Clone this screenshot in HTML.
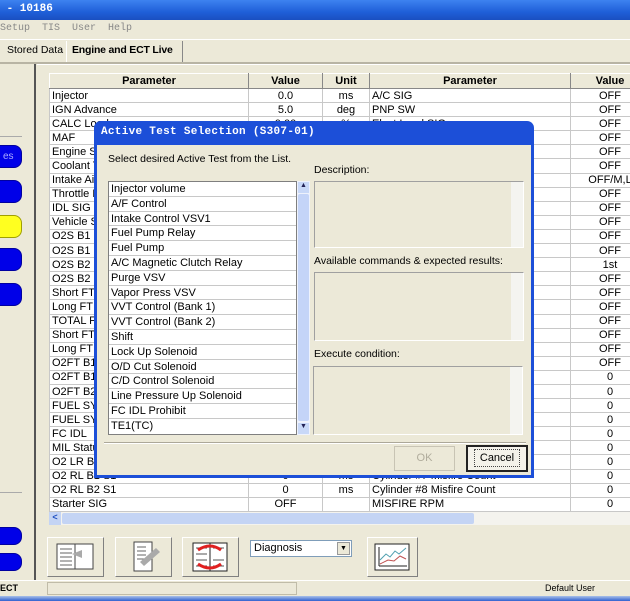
<!DOCTYPE html>
<html><head><meta charset="utf-8"><style>
*{margin:0;padding:0;box-sizing:border-box}
body{width:630px;height:601px;overflow:hidden;background:#ece9d8;font-family:"Liberation Sans",sans-serif;font-size:11px;color:#000;position:relative}
.a{position:absolute}
#title{left:0;top:0;width:630px;height:20px;background:linear-gradient(#3d82f0,#1f5fd8 60%,#1a4fc0);color:#fff;font:bold 11px "Liberation Mono",monospace;padding:3px 0 0 0}
#menu{left:0;top:20px;width:630px;height:18px;background:#ece9d8;color:#888;font:10px "Liberation Mono",monospace;padding:3px 0 0 0}
#tabs{left:0;top:40px;height:22px;font-size:10.5px}
table{border-collapse:collapse;table-layout:fixed}
#grid{left:49px;top:73px;width:600px;background:#fff}
#grid td{height:14.1px;border:1px solid #c8c8c8;padding:0 2px;white-space:nowrap;overflow:hidden;font-size:11px;line-height:12px}
#grid th{height:15px;background:#ece9d8;border:1px solid #888;font-weight:bold;font-size:11px;border-top-color:#fff;border-left-color:#fff}
.c{text-align:center}
.btn{border-radius:8px;background:#0000e8;border:1px solid #0000a0}
#dlg{left:94px;top:121px;width:440px;height:357px;background:#1c4fd8;border-radius:7px 7px 0 0}
#dlgin{left:3px;top:24px;width:434px;height:330px;background:#ece9d8}
#dlgt{left:7px;top:5px;color:#fff;font:bold 11px "Liberation Mono",monospace;letter-spacing:.3px}
.lst div{height:14.8px;border-bottom:1px solid #c8c8c8;padding-left:2px;font-size:11px;line-height:14px;white-space:nowrap}
.box{background:#ece9d8;border:1px solid #a0a0a0;border-right-color:#fff;border-bottom-color:#fff}
.sb{background:#f4f4f0}
.tb{background:#ece9d8;border:1px solid #fff;border-right-color:#808080;border-bottom-color:#808080}
</style></head><body>
<div id="title" class="a">&nbsp;- 10186</div>
<div id="menu" class="a">Setup&nbsp; TIS&nbsp; User&nbsp; Help</div>
<div class="a" style="left:0;top:39px;width:630px;height:1px;background:#fff"></div>
<div id="tabs" class="a"><span class="a" style="left:7px;top:4px;width:58px;white-space:nowrap">Stored Data</span><span class="a" style="left:66px;top:1px;width:117px;height:21px;border-right:1px solid #888;border-left:1px solid #fff;padding:3px 0 0 5px;font-weight:bold;white-space:nowrap;letter-spacing:-0.2px">Engine and ECT Live</span></div>
<div class="a" style="left:0;top:62px;width:630px;height:2px;background:#b8b4a4"></div>
<div class="a" style="left:34px;top:64px;width:2px;height:516px;background:#555"></div>
<div class="a" style="left:37px;top:64px;width:593px;height:1px;background:#fff"></div>
<div class="a" style="left:0;top:136px;width:22px;height:1px;background:#aaa"></div>
<div class="a btn" style="left:-10px;top:145px;width:32px;height:23px;color:#aaf;font-size:10px;padding:5px 0 0 12px">es</div>
<div class="a btn" style="left:-10px;top:180px;width:32px;height:23px"></div>
<div class="a btn" style="left:-10px;top:215px;width:32px;height:23px;background:#ffff20;border-color:#a0a000"></div>
<div class="a btn" style="left:-10px;top:248px;width:32px;height:23px"></div>
<div class="a btn" style="left:-10px;top:283px;width:32px;height:23px"></div>
<div class="a" style="left:0;top:492px;width:22px;height:1px;background:#aaa"></div>
<div class="a btn" style="left:-10px;top:527px;width:32px;height:18px"></div>
<div class="a btn" style="left:-10px;top:553px;width:32px;height:18px"></div>
<table id="grid" class="a">
<colgroup><col style="width:199px"><col style="width:74px"><col style="width:47px"><col style="width:201px"><col style="width:79px"></colgroup>
<tr><th>Parameter</th><th>Value</th><th>Unit</th><th>Parameter</th><th>Value</th></tr>
<tr><td>Injector</td><td class="c">0.0</td><td class="c">ms</td><td>A/C SIG</td><td class="c">OFF</td></tr>
<tr><td>IGN Advance</td><td class="c">5.0</td><td class="c">deg</td><td>PNP SW</td><td class="c">OFF</td></tr>
<tr><td>CALC Load</td><td class="c">0.00</td><td class="c">%</td><td>Elect Load SIG</td><td class="c">OFF</td></tr>
<tr><td>MAF</td><td></td><td></td><td></td><td class="c">OFF</td></tr>
<tr><td>Engine SPD</td><td></td><td></td><td></td><td class="c">OFF</td></tr>
<tr><td>Coolant Temp</td><td></td><td></td><td></td><td class="c">OFF</td></tr>
<tr><td>Intake Air</td><td></td><td></td><td></td><td class="c">OFF/M,L</td></tr>
<tr><td>Throttle POS</td><td></td><td></td><td></td><td class="c">OFF</td></tr>
<tr><td>IDL SIG</td><td></td><td></td><td></td><td class="c">OFF</td></tr>
<tr><td>Vehicle SPD</td><td></td><td></td><td></td><td class="c">OFF</td></tr>
<tr><td>O2S B1 S1</td><td></td><td></td><td></td><td class="c">OFF</td></tr>
<tr><td>O2S B1 S2</td><td></td><td></td><td></td><td class="c">OFF</td></tr>
<tr><td>O2S B2 S1</td><td></td><td></td><td></td><td class="c">1st</td></tr>
<tr><td>O2S B2 S2</td><td></td><td></td><td></td><td class="c">OFF</td></tr>
<tr><td>Short FT #1</td><td></td><td></td><td></td><td class="c">OFF</td></tr>
<tr><td>Long FT #1</td><td></td><td></td><td></td><td class="c">OFF</td></tr>
<tr><td>TOTAL FT</td><td></td><td></td><td></td><td class="c">OFF</td></tr>
<tr><td>Short FT #2</td><td></td><td></td><td></td><td class="c">OFF</td></tr>
<tr><td>Long FT #2</td><td></td><td></td><td></td><td class="c">OFF</td></tr>
<tr><td>O2FT B1</td><td></td><td></td><td></td><td class="c">OFF</td></tr>
<tr><td>O2FT B1</td><td></td><td></td><td></td><td class="c">0</td></tr>
<tr><td>O2FT B2</td><td></td><td></td><td></td><td class="c">0</td></tr>
<tr><td>FUEL SYS</td><td></td><td></td><td></td><td class="c">0</td></tr>
<tr><td>FUEL SYS</td><td></td><td></td><td></td><td class="c">0</td></tr>
<tr><td>FC IDL</td><td></td><td></td><td></td><td class="c">0</td></tr>
<tr><td>MIL Status</td><td></td><td></td><td></td><td class="c">0</td></tr>
<tr><td>O2 LR B1</td><td></td><td></td><td></td><td class="c">0</td></tr>
<tr><td>O2 RL B1 S1</td><td class="c">0</td><td class="c">ms</td><td>Cylinder #7 Misfire Count</td><td class="c">0</td></tr>
<tr><td>O2 RL B2 S1</td><td class="c">0</td><td class="c">ms</td><td>Cylinder #8 Misfire Count</td><td class="c">0</td></tr>
<tr><td>Starter SIG</td><td class="c">OFF</td><td></td><td>MISFIRE RPM</td><td class="c">0</td></tr>
</table>
<div class="a" style="left:49px;top:512px;width:581px;height:13px;background:#f4f3ee"></div>
<div class="a" style="left:49px;top:512px;width:12px;height:13px;background:#c4d4f4;color:#2050c0;font-size:9px;font-weight:bold;text-align:center">&lt;</div>
<div class="a" style="left:62px;top:513px;width:412px;height:11px;background:#c4d4f4;border-radius:2px"></div>
<div class="a tb" style="left:47px;top:537px;width:57px;height:40px"><svg width="55" height="38"><rect x="9" y="6" width="18" height="25" fill="#fff" stroke="#444"/><rect x="27" y="6" width="18" height="25" fill="#fff" stroke="#444"/><g stroke="#666"><line x1="12" y1="11" x2="24" y2="11"/><line x1="12" y1="15" x2="24" y2="15"/><line x1="12" y1="19" x2="24" y2="19"/><line x1="12" y1="23" x2="24" y2="23"/><line x1="12" y1="27" x2="24" y2="27"/></g><path d="M24 16 L34 12 L34 20 Z" fill="#aaa"/></svg></div>
<div class="a tb" style="left:115px;top:537px;width:57px;height:40px"><svg width="55" height="38"><rect x="18" y="4" width="18" height="29" fill="#fff" stroke="#444"/><g stroke="#666"><line x1="21" y1="9" x2="30" y2="9"/><line x1="21" y1="13" x2="30" y2="13"/><line x1="21" y1="17" x2="30" y2="17"/><line x1="21" y1="21" x2="30" y2="21"/></g><path d="M24 24 L40 10 L44 14 L28 28 Z" fill="#aaa"/></svg></div>
<div class="a tb" style="left:182px;top:537px;width:57px;height:40px"><svg width="55" height="38"><rect x="10" y="5" width="17" height="28" fill="#fff" stroke="#222"/><rect x="27" y="5" width="17" height="28" fill="#fff" stroke="#222"/><g stroke="#555"><line x1="13" y1="10" x2="24" y2="10"/><line x1="13" y1="16" x2="24" y2="16"/><line x1="13" y1="22" x2="24" y2="22"/><line x1="13" y1="28" x2="24" y2="28"/><line x1="30" y1="10" x2="41" y2="10"/><line x1="30" y1="22" x2="41" y2="22"/><line x1="30" y1="28" x2="41" y2="28"/></g><path d="M15 12 Q27 4 38 12 M15 26 Q27 34 38 26" stroke="#e02020" stroke-width="3" fill="none"/></svg></div>
<div class="a" style="left:250px;top:540px;width:102px;height:17px;background:#fff;border:1px solid #7f9db9;font-size:11px;padding:1px 0 0 3px">Diagnosis<span class="a" style="right:1px;top:1px;width:13px;height:13px;background:#ece9d8;border:1px solid #999;font-size:7px;text-align:center;line-height:12px">▼</span></div>
<div class="a tb" style="left:367px;top:537px;width:51px;height:40px"><svg width="49" height="38"><rect x="7" y="6" width="34" height="26" fill="#fff" stroke="#222"/><line x1="11" y1="9" x2="11" y2="28" stroke="#222"/><line x1="11" y1="28" x2="39" y2="28" stroke="#222"/><path d="M12 22 L18 16 L22 19 L27 13 L31 16 L38 10" stroke="#50a0b0" fill="none"/><path d="M12 26 L20 22 L26 23 L32 18 L38 21" stroke="#c05050" fill="none"/></svg></div>
<div class="a" style="left:0;top:580px;width:630px;height:16px;background:#ece9d8;border-top:1px solid #fff"></div>
<div class="a" style="left:0;top:583px;font-size:9px;font-weight:bold">ECT</div>
<div class="a" style="left:47px;top:582px;width:250px;height:13px;border:1px solid #c0bca8"></div>
<div class="a" style="left:545px;top:583px;font-size:9px">Default User</div>
<div class="a" style="left:0;top:596px;width:630px;height:5px;background:linear-gradient(#a8c0e8,#3060d0)"></div>
<div id="dlg" class="a">
<div id="dlgt" class="a">Active Test Selection (S307-01)</div>
<div id="dlgin" class="a">
<div class="a" style="left:11px;top:8px;font-size:10.5px">Select desired Active Test from the List.</div>
<div class="a" style="left:217px;top:19px;font-size:10.5px">Description:</div>
<div class="a lst" style="left:11px;top:36px;width:189px;height:254px;background:#fff;border:1px solid #7f7f7f">
<div>Injector volume</div><div>A/F Control</div><div>Intake Control VSV1</div><div>Fuel Pump Relay</div><div>Fuel Pump</div><div>A/C Magnetic Clutch Relay</div><div>Purge VSV</div><div>Vapor Press VSV</div><div>VVT Control (Bank 1)</div><div>VVT Control (Bank 2)</div><div>Shift</div><div>Lock Up Solenoid</div><div>O/D Cut Solenoid</div><div>C/D Control Solenoid</div><div>Line Pressure Up Solenoid</div><div>FC IDL Prohibit</div><div style="border:0">TE1(TC)</div>
</div>
<div class="a" style="left:200px;top:36px;width:13px;height:254px;background:#eef2fc"></div>
<div class="a" style="left:201px;top:37px;width:11px;height:11px;background:#c8d8f8;font-size:7px;text-align:center;color:#225">▲</div>
<div class="a" style="left:201px;top:49px;width:11px;height:227px;background:#c4d4f8;border-radius:2px"></div>
<div class="a" style="left:201px;top:278px;width:11px;height:11px;background:#c8d8f8;font-size:7px;text-align:center;color:#225">▼</div>
<div class="a box" style="left:217px;top:36px;width:210px;height:67px"></div>
<div class="a sb" style="left:414px;top:37px;width:12px;height:65px"></div>
<div class="a" style="left:217px;top:110px;font-size:10.5px">Available commands &amp; expected results:</div>
<div class="a box" style="left:217px;top:127px;width:210px;height:69px"></div>
<div class="a sb" style="left:414px;top:128px;width:12px;height:67px"></div>
<div class="a" style="left:217px;top:203px;font-size:10.5px">Execute condition:</div>
<div class="a box" style="left:216px;top:221px;width:210px;height:69px"></div>
<div class="a sb" style="left:413px;top:222px;width:12px;height:67px"></div>
<div class="a" style="left:7px;top:297px;width:422px;height:2px;border-top:1px solid #aca899;border-bottom:1px solid #fff"></div>
<div class="a" style="left:297px;top:301px;width:61px;height:25px;border:1px solid #c8c4b4;color:#b0ac9c;text-align:center;line-height:23px">OK</div>
<div class="a" style="left:369px;top:300px;width:62px;height:27px;border:2px solid #222;background:#f4f2ea;text-align:center;line-height:22px"><span style="border:1px dotted #444;padding:2px 5px">Cancel</span></div>
</div></div>
</body></html>
